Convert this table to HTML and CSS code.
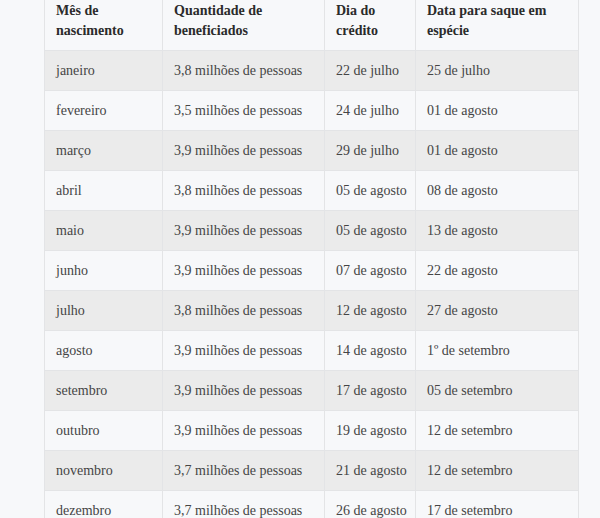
FILE: index.html
```html
<!DOCTYPE html>
<html lang="pt-BR">
<head>
<meta charset="utf-8">
<title>Calendário de pagamentos</title>
<link rel="stylesheet" href="styles.css">
</head>
<body>
<main class="page">
  <table class="schedule">
    <colgroup>
      <col class="c1"><col class="c2"><col class="c3"><col class="c4">
    </colgroup>
    <thead>
      <tr><th>Mês de nascimento</th><th>Quantidade de beneficiados</th><th>Dia do crédito</th><th>Data para saque em espécie</th></tr>
    </thead>
    <tbody>
      <tr><td>janeiro</td><td>3,8 milhões de pessoas</td><td>22 de julho</td><td>25 de julho</td></tr>
      <tr><td>fevereiro</td><td>3,5 milhões de pessoas</td><td>24 de julho</td><td>01 de agosto</td></tr>
      <tr><td>março</td><td>3,9 milhões de pessoas</td><td>29 de julho</td><td>01 de agosto</td></tr>
      <tr><td>abril</td><td>3,8 milhões de pessoas</td><td>05 de agosto</td><td>08 de agosto</td></tr>
      <tr><td>maio</td><td>3,9 milhões de pessoas</td><td>05 de agosto</td><td>13 de agosto</td></tr>
      <tr><td>junho</td><td>3,9 milhões de pessoas</td><td>07 de agosto</td><td>22 de agosto</td></tr>
      <tr><td>julho</td><td>3,8 milhões de pessoas</td><td>12 de agosto</td><td>27 de agosto</td></tr>
      <tr><td>agosto</td><td>3,9 milhões de pessoas</td><td>14 de agosto</td><td>1º de setembro</td></tr>
      <tr><td>setembro</td><td>3,9 milhões de pessoas</td><td>17 de agosto</td><td>05 de setembro</td></tr>
      <tr><td>outubro</td><td>3,9 milhões de pessoas</td><td>19 de agosto</td><td>12 de setembro</td></tr>
      <tr><td>novembro</td><td>3,7 milhões de pessoas</td><td>21 de agosto</td><td>12 de setembro</td></tr>
      <tr><td>dezembro</td><td>3,7 milhões de pessoas</td><td>26 de agosto</td><td>17 de setembro</td></tr>
    </tbody>
  </table>
</main>
</body>
</html>
```

FILE: styles.css
```css
html, body {
  margin: 0;
  padding: 0;
  background: #f7f8fa;
  overflow: hidden;
}
.page {
  padding-left: 44px;
  margin-top: -10px;
}
.schedule {
  border-collapse: collapse;
  table-layout: fixed;
  width: 534px;
  font-family: "Liberation Serif", "DejaVu Serif", serif;
  font-size: 14px;
  line-height: 20px;
  color: #454545;
}
.c1 { width: 118px; }
.c2 { width: 162px; }
.c3 { width: 91px; }
.c4 { width: 163px; }
.schedule th,
.schedule td {
  border: 1px solid #e3e4e6;
  padding: 10px 10px 9px 11px;
  text-align: left;
  vertical-align: top;
  white-space: nowrap;
}
.schedule th {
  font-weight: bold;
  white-space: normal;
  color: #2b2b2b;
  background: #f7f8fa;
}
.schedule tbody tr:nth-child(odd) td {
  background: #ebebeb;
}
.schedule tbody tr:nth-child(even) td {
  background: #f7f8fa;
}
```
